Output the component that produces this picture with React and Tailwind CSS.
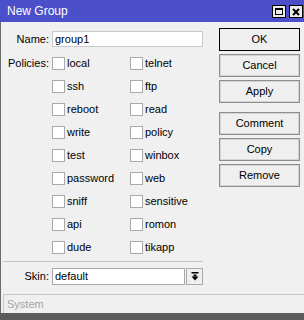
import React from 'react';

const policies = [
  ['local', 'telnet'],
  ['ssh', 'ftp'],
  ['reboot', 'read'],
  ['write', 'policy'],
  ['test', 'winbox'],
  ['password', 'web'],
  ['sniff', 'sensitive'],
  ['api', 'romon'],
  ['dude', 'tikapp'],
];

const Check = ({ label }) => (
  <div className="flex items-center w-[78px]">
    <div className="w-[13px] h-[13px] bg-white border border-[#a9a9a9] shrink-0" />
    <span className="ml-[2px]">{label}</span>
  </div>
);

const Btn = ({ children, primary, extra }) => (
  <div
    className={`w-[81px] h-[23px] flex items-center justify-center bg-[#efefef] ${
      primary ? 'border border-black' : 'border border-[#8e8e8e] shadow-[inset_0_0_0_1px_#d4d4d4]'
    } ${extra || ''}`}
  >
    {children}
  </div>
);

export default function App() {
  return (
    <div
      className="w-[304px] h-[320px] bg-[#f0f0f0] flex flex-col text-[11px] text-black overflow-hidden"
      style={{ fontFamily: '"Liberation Sans", Arial, sans-serif' }}
    >
      {/* title bar */}
      <div className="h-[22px] bg-[#4b4fca] flex items-center pl-[7px] pr-[1px] shrink-0">
        <span className="text-white text-[12px] flex-1">New Group</span>
        <div className="flex gap-[3px] pt-[5px] self-start">
          <div className="w-[14px] h-[13px] bg-[#ececec] border border-black flex items-center justify-center">
            <div className="w-[8px] h-[7px] border border-black border-t-2" />
          </div>
          <div className="w-[14px] h-[13px] bg-[#ececec] border border-black flex items-center justify-center">
            <svg width="8" height="8" viewBox="0 0 8 8">
              <path d="M1 1 L7 7 M7 1 L1 7" stroke="black" strokeWidth="2" />
            </svg>
          </div>
        </div>
      </div>

      {/* body */}
      <div className="flex flex-1 border-l border-[#6a6a6a]">
        <div className="w-[215px] flex flex-col pt-[9px]">
          <div className="flex items-center h-[16px]">
            <span className="w-[48px] text-right">Name:</span>
            <div className="ml-[3px] w-[151px] h-[16px] bg-white border border-[#c9c9c9] flex items-center pl-[2px]">
              group1
            </div>
          </div>

          <div className="mt-[5px] flex flex-col">
            {policies.map(([a, b], i) => (
              <div key={a} className="flex items-center h-[23px]">
                <span className="w-[48px] text-right">{i === 0 ? 'Policies:' : ''}</span>
                <div className="ml-[3px] flex">
                  <Check label={a} />
                  <Check label={b} />
                </div>
              </div>
            ))}
          </div>

          <div className="mt-[2px] ml-[2px] w-[200px] h-px bg-[#c4c4c4]" />

          <div className="mt-[6px] flex items-center h-[17px]">
            <span className="w-[48px] text-right">Skin:</span>
            <div className="ml-[3px] w-[133px] h-[17px] bg-white border border-[#a9a9a9] flex items-center pl-[2px]">
              default
            </div>
            <div className="ml-[1px] w-[17px] h-[17px] bg-[#efefef] border border-[#a9a9a9] flex items-center justify-center">
              <svg width="8" height="9" viewBox="0 0 8 9">
                <rect x="0.5" y="0" width="7" height="1.5" fill="black" />
                <rect x="2.5" y="2.5" width="3" height="2" fill="black" />
                <path d="M0.5 4.5 L7.5 4.5 L4 8.5 Z" fill="black" />
              </svg>
            </div>
          </div>
        </div>

        <div className="flex flex-col pt-[6px] ml-[3px]">
          <Btn primary>OK</Btn>
          <Btn extra="mt-[3px]">Cancel</Btn>
          <Btn extra="mt-[3px]">Apply</Btn>
          <Btn extra="mt-[9px]">Comment</Btn>
          <Btn extra="mt-[3px]">Copy</Btn>
          <Btn extra="mt-[3px]">Remove</Btn>
        </div>
      </div>

      {/* status bar */}
      <div className="h-[19px] shrink-0 border-l border-[#6a6a6a] flex">
        <div className="ml-[2px] flex-1 border-t border-l border-[#c8c8c8] flex items-center pl-[3px] text-[#a4a4a4]">
          System
        </div>
      </div>
      <div className="h-[7px] shrink-0 bg-[#5c5c5c]" />
    </div>
  );
}
